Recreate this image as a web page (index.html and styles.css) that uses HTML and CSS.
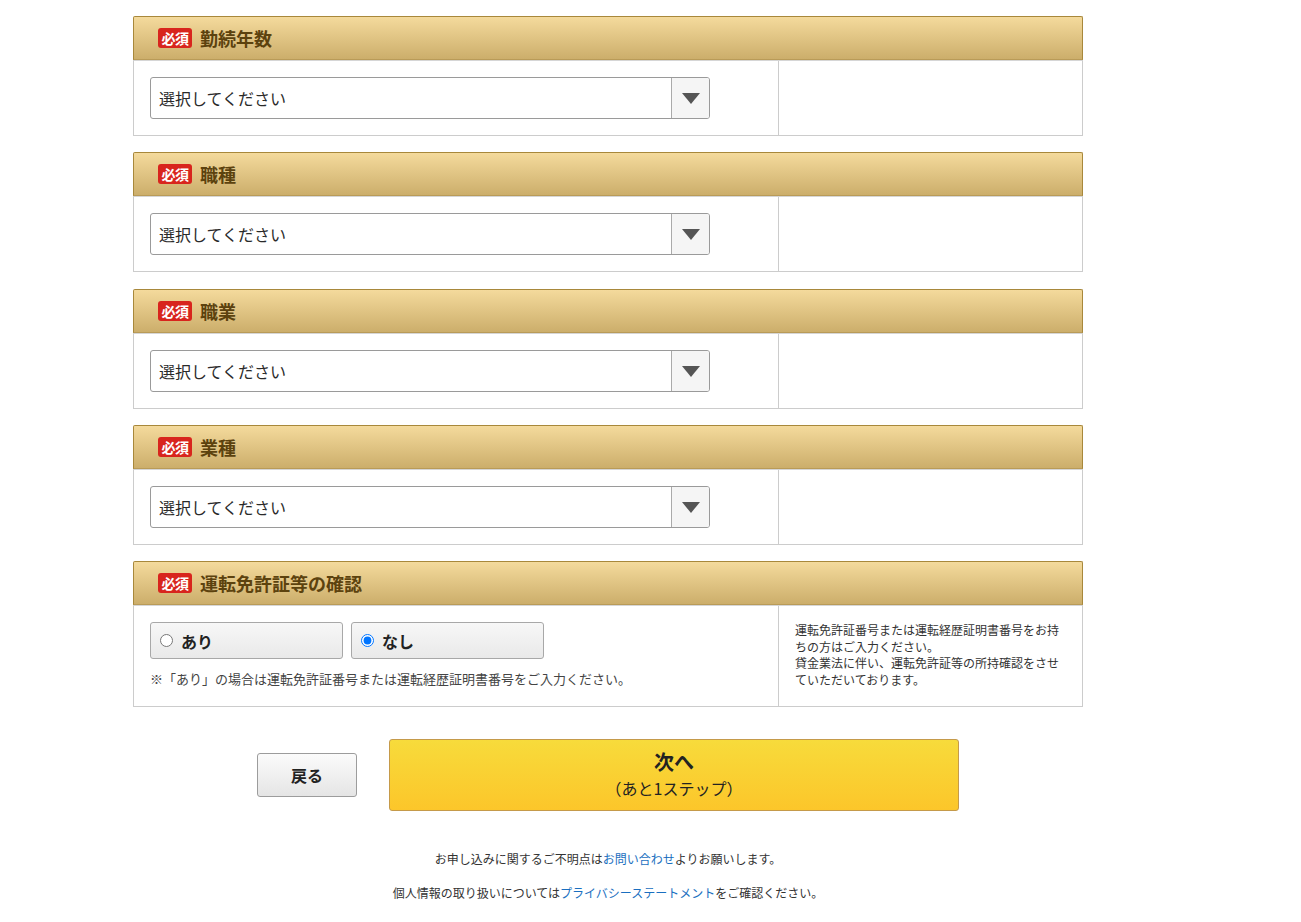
FILE: index.html
```html
<!DOCTYPE html>
<html lang="ja">
<head>
<meta charset="utf-8">
<title>フォーム</title>
<link rel="stylesheet" href="styles.css">
</head>
<body>
<div class="page">
  <section class="field">
    <div class="field-head"><span class="badge">必須</span><span class="field-title">勤続年数</span></div>
    <div class="field-body">
      <div class="cell-main">
        <div class="select"><span class="select-text">選択してください</span><span class="select-arrow"><span class="tri"></span></span></div>
      </div>
      <div class="cell-side"></div>
    </div>
  </section>
  <section class="field">
    <div class="field-head"><span class="badge">必須</span><span class="field-title">職種</span></div>
    <div class="field-body">
      <div class="cell-main">
        <div class="select"><span class="select-text">選択してください</span><span class="select-arrow"><span class="tri"></span></span></div>
      </div>
      <div class="cell-side"></div>
    </div>
  </section>
  <section class="field">
    <div class="field-head"><span class="badge">必須</span><span class="field-title">職業</span></div>
    <div class="field-body">
      <div class="cell-main">
        <div class="select"><span class="select-text">選択してください</span><span class="select-arrow"><span class="tri"></span></span></div>
      </div>
      <div class="cell-side"></div>
    </div>
  </section>
  <section class="field">
    <div class="field-head"><span class="badge">必須</span><span class="field-title">業種</span></div>
    <div class="field-body">
      <div class="cell-main">
        <div class="select"><span class="select-text">選択してください</span><span class="select-arrow"><span class="tri"></span></span></div>
      </div>
      <div class="cell-side"></div>
    </div>
  </section>
  <section class="field">
    <div class="field-head"><span class="badge">必須</span><span class="field-title">運転免許証等の確認</span></div>
    <div class="field-body">
      <div class="cell-main">
        <div class="radios">
          <label class="radio"><input type="radio" name="lic"><span>あり</span></label>
          <label class="radio"><input type="radio" name="lic" checked><span>なし</span></label>
        </div>
        <p class="note">※「あり」の場合は運転免許証番号または運転経歴証明書番号をご入力ください。</p>
      </div>
      <div class="cell-side">
        <p class="side-text">運転免許証番号または運転経歴証明書番号をお持ちの方はご入力ください。<br>貸金業法に伴い、運転免許証等の所持確認をさせていただいております。</p>
      </div>
    </div>
  </section>
  <div class="actions">
    <button class="btn-back" type="button">戻る</button>
    <button class="btn-next" type="button"><span class="next-main">次へ</span><span class="next-sub">（あと1ステップ）</span></button>
  </div>
  <div class="footer">
    <p>お申し込みに関するご不明点は<a href="#">お問い合わせ</a>よりお願いします。</p>
    <p>個人情報の取り扱いについては<a href="#">プライバシーステートメント</a>をご確認ください。</p>
  </div>
</div>
</body>
</html>
```
FILE: styles.css
```css
* { box-sizing: border-box; }
html, body { margin: 0; padding: 0; background: #fff; }
body {
  font-family: "Noto Sans CJK JP", "Noto Sans", sans-serif;
  color: #222;
}
.page {
  width: 950px;
  margin-left: 133px;
  padding-top: 16px;
}
.field { margin-bottom: 16.25px; }
.field-head {
  height: 44px;
  display: flex;
  align-items: center;
  gap: 8px;
  padding-left: 24px;
  background: linear-gradient(#f4da9c, #ccae6b);
  border: 1px solid #a8883b;
  border-bottom-color: #b99b58;
  border-radius: 2px 2px 0 0;
}
.badge {
  width: 34px;
  height: 20px;
  background: #d8251d;
  color: #fff;
  font-size: 14px;
  font-weight: 700;
  line-height: 20px;
  text-align: center;
  border-radius: 3px;
  letter-spacing: -0.5px;
}
.field-title {
  font-size: 18px;
  font-weight: 700;
  color: #5c420e;
}
.field-body {
  display: grid;
  grid-template-columns: 644px 1fr;
  border: 1px solid #cccccc;
  border-top: 1px solid #d6d6d6;
}
.cell-main { padding: 16px; }
.cell-side { border-left: 1px solid #cccccc; padding: 16px; }
.select {
  width: 560px;
  height: 42px;
  display: flex;
  border: 1px solid #9a9a9a;
  border-radius: 3px;
  background: #fff;
}
.select-text {
  flex: 1;
  padding-left: 8px;
  font-size: 16px;
  line-height: 40px;
  color: #2a2a2a;
}
.select-arrow {
  width: 38px;
  border-left: 1px solid #aaaaaa;
  background: #f5f5f5;
  border-radius: 0 2px 2px 0;
  display: flex;
  align-items: center;
  justify-content: center;
}
.tri {
  width: 0;
  height: 0;
  border-left: 9px solid transparent;
  border-right: 9px solid transparent;
  border-top: 11px solid #555;
  margin-top: 1px;
}
.radios { display: flex; gap: 8px; }
.radio {
  width: 193px;
  height: 37px;
  display: flex;
  align-items: center;
  gap: 8px;
  padding-left: 9px;
  border: 1px solid #a8a8a8;
  border-radius: 3px;
  background: linear-gradient(#f7f7f7, #e9e9e9);
  font-size: 16px;
  font-weight: 700;
  color: #222;
}
.radio input {
  margin: 0;
  width: 13px;
  height: 13px;
}
.note {
  margin: 10px 0 0;
  padding-bottom: 1px;
  font-size: 13px;
  line-height: 20px;
  color: #444;
}
.side-text {
  margin: 0;
  font-size: 12px;
  line-height: 16.5px;
  color: #333;
}
.actions {
  margin-top: 32px;
  display: flex;
  justify-content: center;
  align-items: center;
  gap: 32px;
}
.btn-back {
  width: 100px;
  height: 44px;
  border: 1px solid #9c9c9c;
  border-radius: 3px;
  background: linear-gradient(#fbfbfb, #e5e5e5);
  font-family: inherit;
  font-size: 16px;
  font-weight: 700;
  color: #222;
  padding: 0;
}
.btn-next {
  width: 570px;
  height: 72px;
  border: 1px solid #c59a4a;
  border-radius: 3px;
  background: linear-gradient(#f7db3b, #fcc62a);
  font-family: inherit;
  color: #222;
  display: flex;
  flex-direction: column;
  align-items: center;
  justify-content: center;
  padding: 0;
}
.next-main { font-size: 20px; font-weight: 700; line-height: 26px; }
.next-sub { font-size: 16px; line-height: 26px; }
.footer {
  padding-top: 39px;
  text-align: center;
  font-size: 12px;
  line-height: 18px;
  color: #333;
}
.footer p { margin: 0 0 16px; }
.footer a { color: #1a6fc0; text-decoration: none; }
```
